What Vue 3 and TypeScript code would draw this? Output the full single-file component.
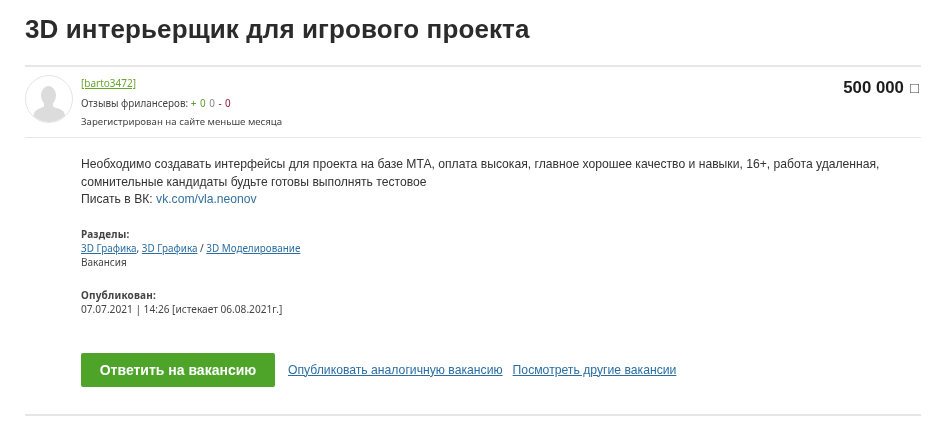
<script setup lang="ts">
const sections = ['3D Графика', '3D Графика', '3D Моделирование']
</script>

<template>
  <main class="page">
    <h1 class="title">3D интерьерщик для игрового проекта</h1>
    <section class="head">
      <svg class="avatar" viewBox="0 0 48 48" width="48" height="48">
        <circle cx="24" cy="24" r="23.5" fill="#fff" stroke="#e4e4e4" />
        <clipPath id="av"><circle cx="24" cy="24" r="23" /></clipPath>
        <g clip-path="url(#av)" fill="#dcdcdc">
          <ellipse cx="23.500" cy="20.500" rx="7.500" ry="9.500" />
          <path d="M19 27h9v4.500c3.500 2 8.500 2.500 10.500 5 1.500 2 2 5 2 10.500H8c0-5.500.5-8.500 2-10.500 2-2.500 5.500-3 9-5z" />
        </g>
      </svg>
      <div class="user">
        <a class="login">[barto3472]</a>
        <div class="meta">Отзывы фрилансеров: <span class="scores"><span class="pos">+ 0</span> <span class="neu">0</span> <span class="neg">- 0</span></span></div>
        <div class="meta reg">Зарегистрирован на сайте меньше месяца</div>
      </div>
      <div class="price">500 000<span class="cur">&#9633;</span></div>
    </section>
    <section class="body">
      <p class="desc">Необходимо создавать интерфейсы для проекта на базе МТА, оплата высокая, главное хорошее качество и навыки, 16+, работа удаленная,<br>сомнительные кандидаты будьте готовы выполнять тестовое<br>Писать в ВК: <a class="vk">vk.com/vla.neonov</a></p>
      <div class="info">
        <b>Разделы:</b>
        <div class="links"><a>{{ sections[0] }}</a>, <a>{{ sections[1] }}</a> / <a>{{ sections[2] }}</a></div>
        <div>Вакансия</div>
      </div>
      <div class="info published">
        <b>Опубликован:</b>
        <div class="date">07.07.2021 | 14:26 [истекает 06.08.2021г.]</div>
      </div>
      <div class="actions">
        <button class="reply">Ответить на вакансию</button>
        <a>Опубликовать аналогичную вакансию</a>
        <a>Посмотреть другие вакансии</a>
      </div>
    </section>
  </main>
</template>

<style>
html, body { background: #fff; overflow: hidden; }
</style>

<style scoped>
.page {
  width: 896px;
  margin-left: 25px;
  height: 430px;
  color: #333;
  font-family: "Noto Sans", sans-serif;
  filter: blur(0.3px);
}
.title {
  margin: 0;
  padding-top: 14px;
  height: 51px;
  box-sizing: border-box;
  font: bold 26px/30px "Liberation Sans", sans-serif;
  letter-spacing: 0.1px;
  color: #2b2b2b;
}
.head {
  margin-top: 14px;
  height: 73px;
  box-sizing: border-box;
  border-top: 2px solid #e6e6e6;
  border-bottom: 1px solid #e6e6e6;
  display: flex;
  padding-top: 8px;
  position: relative;
}
.avatar { flex: none; margin-right: 8px; }
.user { flex: 1; padding-top: 1px; }
.login {
  display: block;
  font-size: 10px;
  line-height: 14px;
  color: #6aa62f;
  text-decoration: underline;
}
.meta { font-size: 9.9px; line-height: 14px; margin-top: 6px; color: #444; }
.reg { font-size: 9.66px; margin-top: 5px; }
.scores { word-spacing: 1px; }
.pos { color: #5a9e2f; }
.neu { color: #888; }
.neg { color: #8d1a3c; }
.price {
  font: bold 16.8px/20px "Liberation Sans", sans-serif;
  color: #1c1c1c;
  padding-top: 3px;
  padding-right: 2px;
}
.cur { font-weight: normal; color: #444; font-size: 15px; margin-left: 6px; }
.body { padding: 18px 0 0 56px; height: 278px; box-sizing: border-box; border-bottom: 2px solid #e6e6e6; }
.desc { margin: 0; font: 12.15px/17.5px "Liberation Sans", sans-serif; color: #333; }
.vk { color: #33709f; }
.info { margin-top: 18px; font-size: 10px; line-height: 14px; color: #444; }
.info b { letter-spacing: 0.2px; }
.links { font-size: 9.9px; }
.date { font-size: 10.15px; }
.info a { color: #2b6ea3; text-decoration: underline; }
.published { margin-top: 19px; }
.actions {
  display: flex;
  align-items: center;
  margin-top: 37px;
  font: 12.2px "Liberation Sans", sans-serif;
}
.actions a { color: #2b6ea3; text-decoration: underline; margin-left: 13px; }
.actions a:last-child { margin-left: 10px; }
.reply {
  width: 194px;
  height: 34px;
  border: 0;
  border-radius: 2px;
  background: #4ea429;
  color: #fff;
  font: bold 14px "Liberation Sans", sans-serif;
}
</style>
